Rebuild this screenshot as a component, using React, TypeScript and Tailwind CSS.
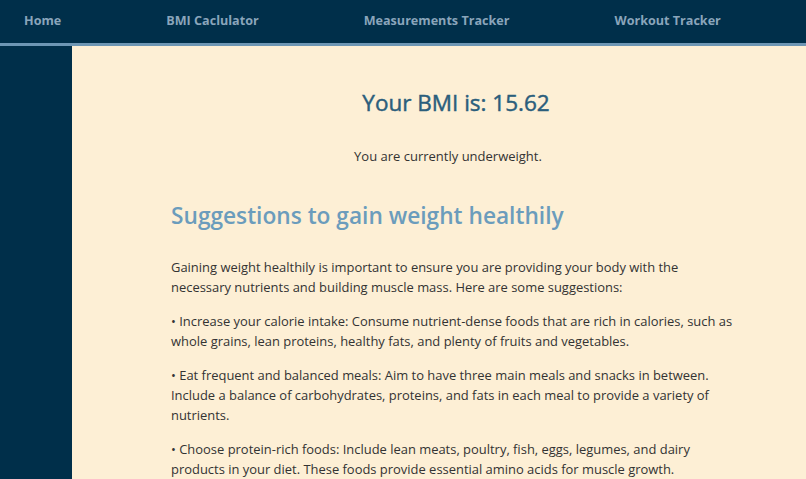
import React from "react";

export default function App() {
  const navItems = ["Home", "BMI Caclulator", "Measurements Tracker", "Workout Tracker"];
  return (
    <div className="w-[806px] h-[479px] overflow-hidden flex flex-col bg-[#fdefd5] font-['Open_Sans',sans-serif]">
      <nav className="h-[43px] bg-[#002f4a] flex items-center gap-[105px] pl-6 shrink-0">
        {navItems.map((n) => (
          <span key={n} className="text-[12.6px] font-bold text-[#8aa5bb] whitespace-nowrap">
            {n}
          </span>
        ))}
      </nav>
      <div className="h-[3px] bg-[#6d96b4] shrink-0" />
      <div className="flex flex-1 min-h-0">
        <aside className="w-[72px] bg-[#002f4a] shrink-0" />
        <main className="flex-1 pl-[99px] pr-[65px] pt-[41px] text-[#333333]">
          <h2 className="text-center text-[22.5px] leading-[32px] font-medium text-[#2b5e7c] [-webkit-text-stroke:0.45px_#2b5e7c]">
            Your BMI is: 15.62
          </h2>
          <p className="mt-[27px] mr-[16px] text-center text-[13px] leading-[20px]">
            You are currently underweight.
          </p>
          <h3 className="mt-[34px] text-[22.7px] leading-[32px] font-semibold text-[#6b9cbc]">
            Suggestions to gain weight healthily
          </h3>
          <div className="mt-[25px] flex flex-col gap-[14px] text-[12.95px] leading-[20px]">
            <p>
              Gaining weight healthily is important to ensure you are providing your body with the
              necessary nutrients and building muscle mass. Here are some suggestions:
            </p>
            <p>
              • Increase your calorie intake: Consume nutrient-dense foods that are rich in calories, such as
              whole grains, lean proteins, healthy fats, and plenty of fruits and vegetables.
            </p>
            <p>
              • Eat frequent and balanced meals: Aim to have three main meals and snacks in between.
              Include a balance of carbohydrates, proteins, and fats in each meal to provide a variety of
              nutrients.
            </p>
            <p>
              • Choose protein-rich foods: Include lean meats, poultry, fish, eggs, legumes, and dairy
              products in your diet. These foods provide essential amino acids for muscle growth.
            </p>
          </div>
        </main>
      </div>
    </div>
  );
}
